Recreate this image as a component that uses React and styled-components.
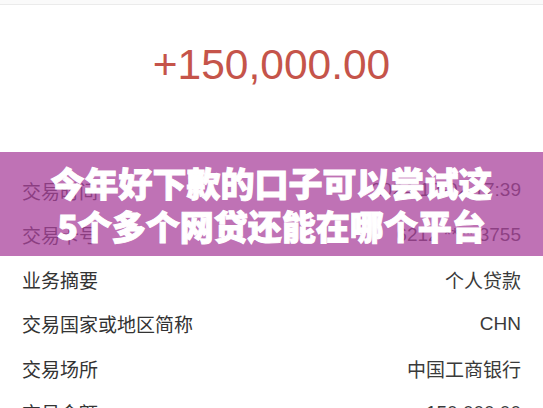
import styled, { createGlobalStyle } from "styled-components";

const GlobalStyle = createGlobalStyle`
  html, body {
    margin: 0;
    padding: 0;
    background: #ffffff;
    overflow: hidden;
  }
  body {
    font-family: "Liberation Sans", "Noto Sans CJK SC", sans-serif;
  }
`;

const Screen = styled.div`
  position: relative;
  width: 543px;
  height: 408px;
  overflow: hidden;
  background: #fff;
`;

const TopBar = styled.div`
  height: 4px;
  border-bottom: 1px solid #ebebeb;
  background: #fafafa;
`;

const AmountBlock = styled.div`
  height: 163px;
  box-sizing: border-box;
  padding-top: 36px;
  text-align: center;
`;

const Amount = styled.div`
  font-family: "Liberation Sans", Arial, sans-serif;
  font-size: 42.5px;
  line-height: 48px;
  color: #c5544a;
`;

const List = styled.div`
  display: flex;
  flex-direction: column;
  padding: 0 22px;
`;

const Row = styled.div`
  display: flex;
  justify-content: space-between;
  align-items: center;
  height: 44.5px;
  font-size: 19px;
  color: #333;
`;

const Label = styled.span`
  font-family: "Noto Sans CJK SC", sans-serif;
`;

const Value = styled.span`
  font-family: "Liberation Sans", "Noto Sans CJK SC", sans-serif;
  color: #3a3a3a;
`;

const Banner = styled.div`
  position: absolute;
  left: 0;
  right: 0;
  top: 152px;
  height: 104px;
  background: rgba(170, 67, 156, 0.75);
  display: flex;
  flex-direction: column;
  align-items: center;
  justify-content: center;
`;

const BannerLine = styled.div`
  font-family: "Noto Sans CJK SC", sans-serif;
  font-weight: 900;
  font-size: 34px;
  line-height: 43px;
  color: #fff;
  white-space: nowrap;
  -webkit-text-stroke: 1px #fff;
`;

const rows = [
  ["交易时间", "2024-12-02 17:39"],
  ["交易卡号", "6212 **** 3755"],
  ["业务摘要", "个人贷款"],
  ["交易国家或地区简称", "CHN"],
  ["交易场所", "中国工商银行"],
  ["交易金额", "150,000.00"],
];

export default function App() {
  return (
    <Screen>
      <GlobalStyle />
      <TopBar />
      <AmountBlock>
        <Amount>+150,000.00</Amount>
      </AmountBlock>
      <List>
        {rows.map(([label, value]) => (
          <Row key={label}>
            <Label>{label}</Label>
            <Value>{value}</Value>
          </Row>
        ))}
      </List>
      <Banner>
        <BannerLine>今年好下款的口子可以尝试这</BannerLine>
        <BannerLine>5个多个网贷还能在哪个平台</BannerLine>
      </Banner>
    </Screen>
  );
}
